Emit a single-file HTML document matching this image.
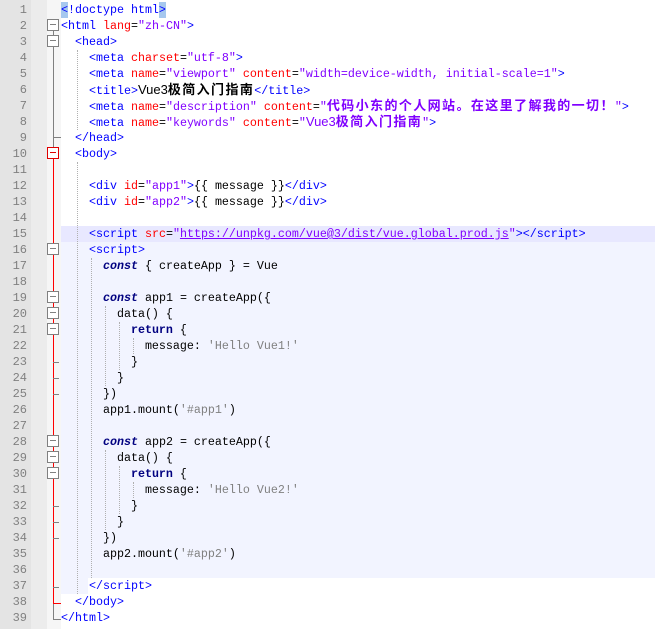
<!DOCTYPE html>
<html><head><meta charset="utf-8"><style>
body{margin:0;width:655px;height:629px;background:#fff;position:relative;overflow:hidden;font-family:"Liberation Mono",monospace;font-size:11.67px}
.ln{position:absolute;left:0;width:31px;top:0;height:629px;background:#e4e4e4}
.m2{position:absolute;left:31px;width:16px;top:0;height:629px;background:#ececec}
.fm{position:absolute;left:47px;width:14px;top:0;height:629px;background:#f6f6f6}
.n{position:absolute;left:0;width:27px;text-align:right;color:#808080;height:16px;line-height:16px;font-family:"Liberation Mono",monospace;font-size:12px}
.l{position:absolute;left:61px;height:16px;line-height:16px;white-space:pre;color:#000}
.t{color:#0000ff}.a{color:#ff0000}.v{color:#8000ff}.s{color:#808080}
.k{color:#000080;font-weight:bold;font-style:italic}.r{color:#000080;font-weight:bold}
.c{font-family:"Liberation Sans","Noto Sans CJK SC",sans-serif;font-size:13px;font-weight:bold;letter-spacing:1.4px}
.vs{font-family:"Liberation Sans",sans-serif;font-size:13px}
.u{text-decoration:underline;color:#8000ff}
.bx{position:absolute;left:47px;width:10px;height:10px;border:1px solid #808080;background:#fff;z-index:3}
.bx:after{content:"";position:absolute;left:2px;top:4px;width:6px;height:1px;background:#808080}
.bx.red{border-color:#e00000}.bx.red:after{background:#e00000}
.g{position:absolute;border-left:1px dotted #b0b0b0;width:0}
.hl{position:absolute;background:#a6c8ee}
.fl{position:absolute;z-index:2}
</style></head><body>
<div class="ln"></div><div class="m2"></div><div class="fm"></div>
<div style="position:absolute;left:61px;top:226px;width:594px;height:16px;background:#e8e8ff"></div>
<div style="position:absolute;left:61px;top:242px;width:594px;height:336px;background:#f2f4ff"></div>
<div style="position:absolute;left:61px;top:578px;width:27px;height:16px;background:#f2f4ff"></div>
<div class="hl" style="left:61px;top:2px;width:7px;height:16px"></div>
<div class="hl" style="left:159px;top:2px;width:7px;height:16px"></div>
<!-- fold lines -->
<div class="fl" style="left:53px;top:29px;width:1px;height:590px;background:#808080"></div>
<div class="fl" style="left:53px;top:619px;width:8px;height:1px;background:#808080"></div>
<div class="fl" style="left:53px;top:137px;width:8px;height:1px;background:#808080"></div>
<div class="fl" style="left:53px;top:157px;width:1px;height:446px;background:#ff0000;z-index:2"></div>
<div class="fl" style="left:53px;top:603px;width:8px;height:1px;background:#ff0000"></div>
<div class="fl" style="left:53px;top:362px;width:6px;height:1px;background:#808080"></div>
<div class="fl" style="left:53px;top:378px;width:6px;height:1px;background:#808080"></div>
<div class="fl" style="left:53px;top:394px;width:6px;height:1px;background:#808080"></div>
<div class="fl" style="left:53px;top:506px;width:6px;height:1px;background:#808080"></div>
<div class="fl" style="left:53px;top:522px;width:6px;height:1px;background:#808080"></div>
<div class="fl" style="left:53px;top:538px;width:6px;height:1px;background:#808080"></div>
<div class="fl" style="left:53px;top:587px;width:6px;height:1px;background:#808080"></div>
<div class="bx" style="top:19px"></div><div class="bx" style="top:35px"></div>
<div class="bx red" style="top:147px"></div>
<div class="bx" style="top:243px"></div><div class="bx" style="top:291px"></div><div class="bx" style="top:307px"></div><div class="bx" style="top:323px"></div>
<div class="bx" style="top:435px"></div><div class="bx" style="top:451px"></div><div class="bx" style="top:467px"></div>
<!-- guides -->
<div class="g" style="left:77px;top:50px;height:80px"></div>
<div class="g" style="left:77px;top:162px;height:432px"></div>
<div class="g" style="left:91px;top:258px;height:320px"></div>
<div class="g" style="left:105px;top:306px;height:80px"></div>
<div class="g" style="left:105px;top:450px;height:80px"></div>
<div class="g" style="left:119px;top:322px;height:48px"></div>
<div class="g" style="left:119px;top:466px;height:48px"></div>
<div class="g" style="left:133px;top:338px;height:16px"></div>
<div class="g" style="left:133px;top:482px;height:16px"></div>

<div class="n" style="top:2px">1</div><div class="n" style="top:18px">2</div><div class="n" style="top:34px">3</div><div class="n" style="top:50px">4</div><div class="n" style="top:66px">5</div><div class="n" style="top:82px">6</div><div class="n" style="top:98px">7</div><div class="n" style="top:114px">8</div><div class="n" style="top:130px">9</div><div class="n" style="top:146px">10</div><div class="n" style="top:162px">11</div><div class="n" style="top:178px">12</div><div class="n" style="top:194px">13</div><div class="n" style="top:210px">14</div><div class="n" style="top:226px">15</div><div class="n" style="top:242px">16</div><div class="n" style="top:258px">17</div><div class="n" style="top:274px">18</div><div class="n" style="top:290px">19</div><div class="n" style="top:306px">20</div><div class="n" style="top:322px">21</div><div class="n" style="top:338px">22</div><div class="n" style="top:354px">23</div><div class="n" style="top:370px">24</div><div class="n" style="top:386px">25</div><div class="n" style="top:402px">26</div><div class="n" style="top:418px">27</div><div class="n" style="top:434px">28</div><div class="n" style="top:450px">29</div><div class="n" style="top:466px">30</div><div class="n" style="top:482px">31</div><div class="n" style="top:498px">32</div><div class="n" style="top:514px">33</div><div class="n" style="top:530px">34</div><div class="n" style="top:546px">35</div><div class="n" style="top:562px">36</div><div class="n" style="top:578px">37</div><div class="n" style="top:594px">38</div><div class="n" style="top:610px">39</div>

<div class="l t" style="top:2px">&lt;!doctype html&gt;</div>
<div class="l" style="top:18px"><span class="t">&lt;html </span><span class="a">lang</span>=<span class="v">"zh-CN"</span><span class="t">&gt;</span></div>
<div class="l" style="top:34px">  <span class="t">&lt;head&gt;</span></div>
<div class="l" style="top:50px">    <span class="t">&lt;meta </span><span class="a">charset</span>=<span class="v">"utf-8"</span><span class="t">&gt;</span></div>
<div class="l" style="top:66px">    <span class="t">&lt;meta </span><span class="a">name</span>=<span class="v">"viewport"</span> <span class="a">content</span>=<span class="v">"width=device-width, initial-scale=1"</span><span class="t">&gt;</span></div>
<div class="l" style="top:82px">    <span class="t">&lt;title&gt;</span><span class="vs">Vue3</span><span class="c">极简入门指南</span><span class="t">&lt;/title&gt;</span></div>
<div class="l" style="top:98px">    <span class="t">&lt;meta </span><span class="a">name</span>=<span class="v">"description"</span> <span class="a">content</span>=<span class="v">"<span class="c">代码小东的个人网站。在这里了解我的一切！</span>"</span><span class="t">&gt;</span></div>
<div class="l" style="top:114px">    <span class="t">&lt;meta </span><span class="a">name</span>=<span class="v">"keywords"</span> <span class="a">content</span>=<span class="v">"<span class="vs">Vue3</span><span class="c">极简入门指南</span>"</span><span class="t">&gt;</span></div>
<div class="l" style="top:130px">  <span class="t">&lt;/head&gt;</span></div>
<div class="l" style="top:146px">  <span class="t">&lt;body&gt;</span></div>
<div class="l" style="top:178px">    <span class="t">&lt;div </span><span class="a">id</span>=<span class="v">"app1"</span><span class="t">&gt;</span>{{ message }}<span class="t">&lt;/div&gt;</span></div>
<div class="l" style="top:194px">    <span class="t">&lt;div </span><span class="a">id</span>=<span class="v">"app2"</span><span class="t">&gt;</span>{{ message }}<span class="t">&lt;/div&gt;</span></div>
<div class="l" style="top:226px">    <span class="t">&lt;script </span><span class="a">src</span>=<span class="v">"</span><span class="u">https://unpkg.com/vue@3/dist/vue.global.prod.js</span><span class="v">"</span><span class="t">&gt;&lt;/script&gt;</span></div>
<div class="l" style="top:242px">    <span class="t">&lt;script&gt;</span></div>
<div class="l" style="top:258px">      <span class="k">const</span> { createApp } = Vue</div>
<div class="l" style="top:290px">      <span class="k">const</span> app1 = createApp({</div>
<div class="l" style="top:306px">        data() {</div>
<div class="l" style="top:322px">          <span class="r">return</span> {</div>
<div class="l" style="top:338px">            message: <span class="s">'Hello Vue1!'</span></div>
<div class="l" style="top:354px">          }</div>
<div class="l" style="top:370px">        }</div>
<div class="l" style="top:386px">      })</div>
<div class="l" style="top:402px">      app1.mount(<span class="s">'#app1'</span>)</div>
<div class="l" style="top:434px">      <span class="k">const</span> app2 = createApp({</div>
<div class="l" style="top:450px">        data() {</div>
<div class="l" style="top:466px">          <span class="r">return</span> {</div>
<div class="l" style="top:482px">            message: <span class="s">'Hello Vue2!'</span></div>
<div class="l" style="top:498px">          }</div>
<div class="l" style="top:514px">        }</div>
<div class="l" style="top:530px">      })</div>
<div class="l" style="top:546px">      app2.mount(<span class="s">'#app2'</span>)</div>
<div class="l" style="top:578px">    <span class="t">&lt;/script&gt;</span></div>
<div class="l" style="top:594px">  <span class="t">&lt;/body&gt;</span></div>
<div class="l" style="top:610px"><span class="t">&lt;/html&gt;</span></div>
</body></html>
